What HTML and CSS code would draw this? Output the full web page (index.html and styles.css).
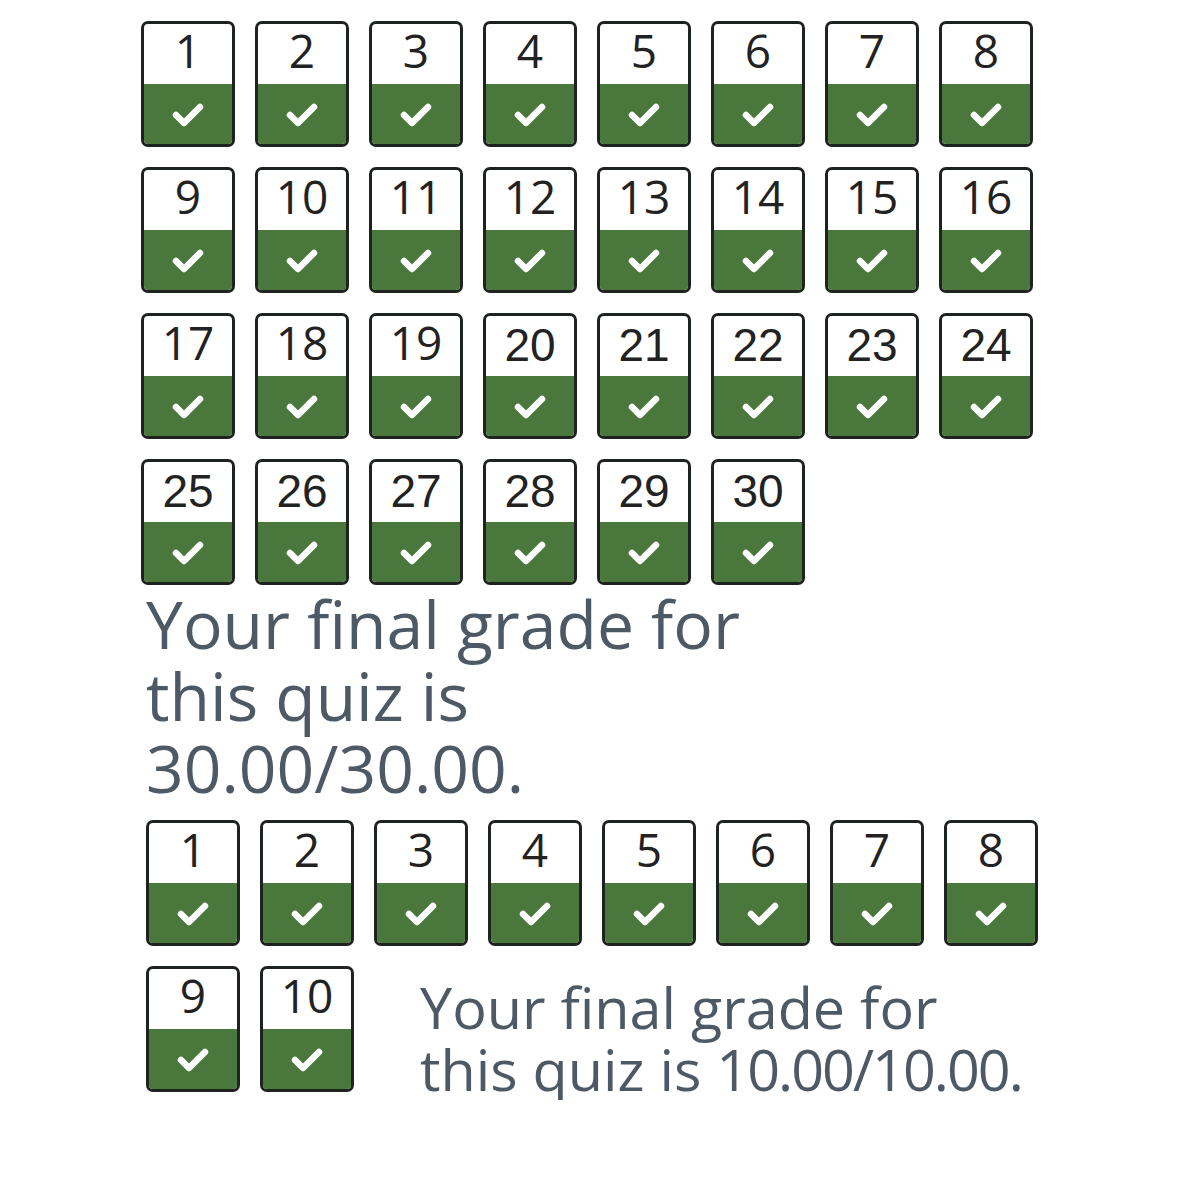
FILE: index.html
```html
<!DOCTYPE html>
<html lang="en">
<head>
<meta charset="utf-8">
<title>Quiz results</title>
<link rel="stylesheet" href="styles.css">
</head>
<body>
<main class="page">
  <section class="quiz quiz-long">
    <div class="tile"><div class="num">1</div><div class="mark"><svg viewBox="0 0 32 24"><polyline points="4,12 12,20 28,4"/></svg></div></div>
    <div class="tile"><div class="num">2</div><div class="mark"><svg viewBox="0 0 32 24"><polyline points="4,12 12,20 28,4"/></svg></div></div>
    <div class="tile"><div class="num">3</div><div class="mark"><svg viewBox="0 0 32 24"><polyline points="4,12 12,20 28,4"/></svg></div></div>
    <div class="tile"><div class="num">4</div><div class="mark"><svg viewBox="0 0 32 24"><polyline points="4,12 12,20 28,4"/></svg></div></div>
    <div class="tile"><div class="num">5</div><div class="mark"><svg viewBox="0 0 32 24"><polyline points="4,12 12,20 28,4"/></svg></div></div>
    <div class="tile"><div class="num">6</div><div class="mark"><svg viewBox="0 0 32 24"><polyline points="4,12 12,20 28,4"/></svg></div></div>
    <div class="tile"><div class="num">7</div><div class="mark"><svg viewBox="0 0 32 24"><polyline points="4,12 12,20 28,4"/></svg></div></div>
    <div class="tile"><div class="num">8</div><div class="mark"><svg viewBox="0 0 32 24"><polyline points="4,12 12,20 28,4"/></svg></div></div>
    <div class="tile"><div class="num">9</div><div class="mark"><svg viewBox="0 0 32 24"><polyline points="4,12 12,20 28,4"/></svg></div></div>
    <div class="tile"><div class="num">10</div><div class="mark"><svg viewBox="0 0 32 24"><polyline points="4,12 12,20 28,4"/></svg></div></div>
    <div class="tile"><div class="num">11</div><div class="mark"><svg viewBox="0 0 32 24"><polyline points="4,12 12,20 28,4"/></svg></div></div>
    <div class="tile"><div class="num">12</div><div class="mark"><svg viewBox="0 0 32 24"><polyline points="4,12 12,20 28,4"/></svg></div></div>
    <div class="tile"><div class="num">13</div><div class="mark"><svg viewBox="0 0 32 24"><polyline points="4,12 12,20 28,4"/></svg></div></div>
    <div class="tile"><div class="num">14</div><div class="mark"><svg viewBox="0 0 32 24"><polyline points="4,12 12,20 28,4"/></svg></div></div>
    <div class="tile"><div class="num">15</div><div class="mark"><svg viewBox="0 0 32 24"><polyline points="4,12 12,20 28,4"/></svg></div></div>
    <div class="tile"><div class="num">16</div><div class="mark"><svg viewBox="0 0 32 24"><polyline points="4,12 12,20 28,4"/></svg></div></div>
    <div class="tile"><div class="num">17</div><div class="mark"><svg viewBox="0 0 32 24"><polyline points="4,12 12,20 28,4"/></svg></div></div>
    <div class="tile"><div class="num">18</div><div class="mark"><svg viewBox="0 0 32 24"><polyline points="4,12 12,20 28,4"/></svg></div></div>
    <div class="tile"><div class="num">19</div><div class="mark"><svg viewBox="0 0 32 24"><polyline points="4,12 12,20 28,4"/></svg></div></div>
    <div class="tile"><div class="num num-plain">20</div><div class="mark"><svg viewBox="0 0 32 24"><polyline points="4,12 12,20 28,4"/></svg></div></div>
    <div class="tile"><div class="num num-plain">21</div><div class="mark"><svg viewBox="0 0 32 24"><polyline points="4,12 12,20 28,4"/></svg></div></div>
    <div class="tile"><div class="num num-plain">22</div><div class="mark"><svg viewBox="0 0 32 24"><polyline points="4,12 12,20 28,4"/></svg></div></div>
    <div class="tile"><div class="num num-plain">23</div><div class="mark"><svg viewBox="0 0 32 24"><polyline points="4,12 12,20 28,4"/></svg></div></div>
    <div class="tile"><div class="num num-plain">24</div><div class="mark"><svg viewBox="0 0 32 24"><polyline points="4,12 12,20 28,4"/></svg></div></div>
    <div class="tile"><div class="num num-plain">25</div><div class="mark"><svg viewBox="0 0 32 24"><polyline points="4,12 12,20 28,4"/></svg></div></div>
    <div class="tile"><div class="num num-plain">26</div><div class="mark"><svg viewBox="0 0 32 24"><polyline points="4,12 12,20 28,4"/></svg></div></div>
    <div class="tile"><div class="num num-plain">27</div><div class="mark"><svg viewBox="0 0 32 24"><polyline points="4,12 12,20 28,4"/></svg></div></div>
    <div class="tile"><div class="num num-plain">28</div><div class="mark"><svg viewBox="0 0 32 24"><polyline points="4,12 12,20 28,4"/></svg></div></div>
    <div class="tile"><div class="num num-plain">29</div><div class="mark"><svg viewBox="0 0 32 24"><polyline points="4,12 12,20 28,4"/></svg></div></div>
    <div class="tile"><div class="num num-plain">30</div><div class="mark"><svg viewBox="0 0 32 24"><polyline points="4,12 12,20 28,4"/></svg></div></div>
    <p class="grade grade-wide">Your final grade for<br>this quiz is<br>30.00/30.00.</p>
  </section>

  <section class="quiz quiz-short">
    <div class="tile"><div class="num">1</div><div class="mark"><svg viewBox="0 0 32 24"><polyline points="4,12 12,20 28,4"/></svg></div></div>
    <div class="tile"><div class="num">2</div><div class="mark"><svg viewBox="0 0 32 24"><polyline points="4,12 12,20 28,4"/></svg></div></div>
    <div class="tile"><div class="num">3</div><div class="mark"><svg viewBox="0 0 32 24"><polyline points="4,12 12,20 28,4"/></svg></div></div>
    <div class="tile"><div class="num">4</div><div class="mark"><svg viewBox="0 0 32 24"><polyline points="4,12 12,20 28,4"/></svg></div></div>
    <div class="tile"><div class="num">5</div><div class="mark"><svg viewBox="0 0 32 24"><polyline points="4,12 12,20 28,4"/></svg></div></div>
    <div class="tile"><div class="num">6</div><div class="mark"><svg viewBox="0 0 32 24"><polyline points="4,12 12,20 28,4"/></svg></div></div>
    <div class="tile"><div class="num">7</div><div class="mark"><svg viewBox="0 0 32 24"><polyline points="4,12 12,20 28,4"/></svg></div></div>
    <div class="tile"><div class="num">8</div><div class="mark"><svg viewBox="0 0 32 24"><polyline points="4,12 12,20 28,4"/></svg></div></div>
    <div class="tile"><div class="num">9</div><div class="mark"><svg viewBox="0 0 32 24"><polyline points="4,12 12,20 28,4"/></svg></div></div>
    <div class="tile"><div class="num">10</div><div class="mark"><svg viewBox="0 0 32 24"><polyline points="4,12 12,20 28,4"/></svg></div></div>
    <p class="grade grade-side">Your final grade for<br>this quiz is <span class="score">10.00/10.00.</span></p>
  </section>
</main>
</body>
</html>
```

FILE: styles.css
```css
html, body {
  margin: 0;
  padding: 0;
  background: #ffffff;
}

.page {
  padding: 21px 0 0 141px;
  font-family: "Open Sans", "Noto Sans", sans-serif;
}

/* 8-column board of question tiles */
.quiz {
  display: grid;
  grid-template-columns: repeat(8, 94px);
  grid-auto-rows: auto;
  column-gap: 20px;
  row-gap: 20px;
  align-items: start;
}

.quiz-short {
  margin: 17px 0 0 5px;
}

.tile {
  box-sizing: border-box;
  display: flex;
  flex-direction: column;
  width: 94px;
  height: 126px;
  border: 3px solid #1f2320;
  border-radius: 7px;
  background: #ffffff;
}

.num {
  height: 60px;
  flex: 0 0 60px;
  text-align: center;
  font-size: 46px;
  line-height: 52px;
  color: #222222;
}

.num-plain {
  font-family: "Liberation Sans", Arial, sans-serif;
  line-height: 58px;
}

.mark {
  flex: 1;
  display: flex;
  align-items: center;
  justify-content: center;
  background: #4a773c;
  border-radius: 0 0 4px 4px;
}

.mark svg {
  width: 32px;
  height: 24px;
  margin-top: 2px;
}

.mark polyline {
  fill: none;
  stroke: #ffffff;
  stroke-width: 6.5;
  stroke-linecap: round;
  stroke-linejoin: round;
}

/* grade summary text */
.grade {
  margin: 0;
  color: #4d5a66;
  white-space: nowrap;
  font-weight: 400;
}

.grade-wide {
  grid-column: 1 / -1;
  margin: -18px 0 0 5px;
  font-size: 66px;
  line-height: 72px;
}

.grade-side {
  grid-column: 3 / -1;
  grid-row: 2;
  margin: 10px 0 0 46px;
  font-size: 57.5px;
  line-height: 62px;
}

.score {
  letter-spacing: -2px;
}
```
